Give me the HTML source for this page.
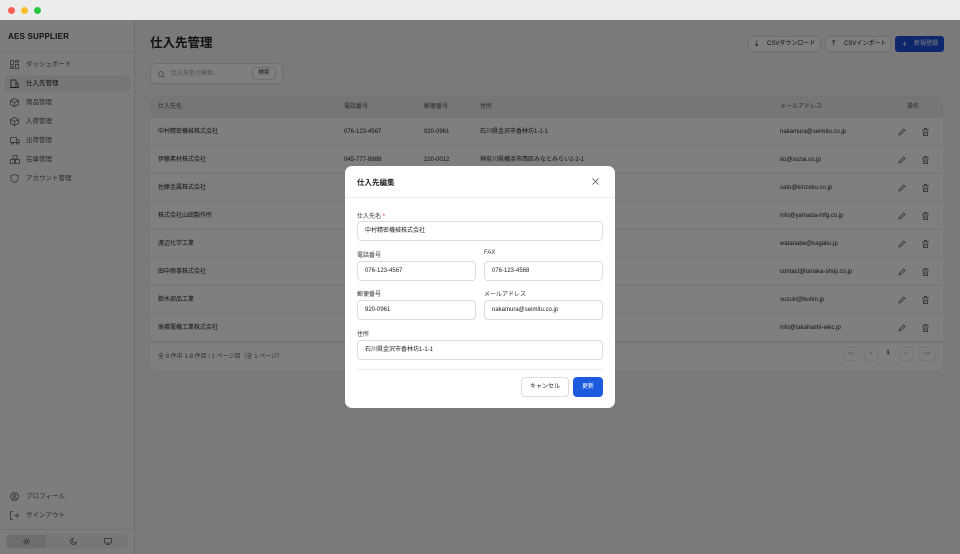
<!DOCTYPE html>
<html><head><meta charset="utf-8"><style>
*{box-sizing:border-box;margin:0;padding:0}
body{width:960px;height:554px;overflow:hidden;font-family:"Liberation Sans","Noto Sans CJK JP",sans-serif;background:#f5f5f5;position:relative;color:#222}
.tb{position:absolute;left:0;top:0;width:960px;height:20px;background:#ececec;z-index:30}
.tb i{position:absolute;top:7px;width:7px;height:7px;border-radius:50%}
.sb{position:absolute;left:0;top:20px;width:135px;height:534px;background:#fafafa;border-right:1px solid #e3e3e3}
.logo{position:absolute;left:8px;top:12px;font-size:8px;font-weight:bold;letter-spacing:.2px}
.sbl{position:absolute;left:0;top:31px;width:134px;border-top:1px solid #e6e6e6}
.nav{position:absolute;left:5px;width:125px;height:17px;font-size:6.5px;color:#555;line-height:17px;padding-left:21px;border-radius:4px}
.nav svg{position:absolute;left:5px;top:4px}
.act{background:#ececec;color:#222}
.main{position:absolute;left:135px;top:20px;right:0;bottom:0}
h1{position:absolute;left:15px;top:15px;font-size:12.5px;font-weight:bold;line-height:16px}
.btn{position:absolute;top:16px;height:16px;border:1px solid #ddd;background:#fff;border-radius:3px;font-size:6px;line-height:14px;padding-left:18px}
.srch{position:absolute;left:15px;top:43px;width:133px;height:21px;border:1px solid #ddd;border-radius:5px;background:#fff;font-size:6px;color:#999;line-height:21px;padding-left:20px}
.srch b{position:absolute;right:6px;top:3px;height:13px;width:24px;border:1px solid #ddd;border-radius:3px;font-weight:normal;color:#333;text-align:center;line-height:11px;font-size:5.5px}
.tbl{position:absolute;left:15px;top:76px;width:793px;height:274px;background:#fff;border-radius:5px;overflow:hidden}
.th{height:22px;background:#ededed;font-size:6px;color:#555;position:relative}
.row{height:28px;border-bottom:1px solid #eaeaea;position:relative;font-size:6px}
.c{position:absolute;top:0;line-height:28px}
.th .c{line-height:22px}
.ft{position:absolute;left:8px;top:255px;font-size:6px;color:#555}
.pg{position:absolute;top:251px;height:14px;border:1px solid #eee;border-radius:3px;font-size:5.5px;color:#999;text-align:center;line-height:12px}
.ov{position:absolute;left:0;top:20px;width:960px;height:534px;background:rgba(0,0,0,.5);z-index:10}
.md{position:absolute;left:345px;top:166px;width:270px;height:242px;background:#fff;border-radius:7px;z-index:20}
.md .t{position:absolute;left:12px;top:11px;font-size:7.5px;font-weight:bold}
.md .hl{position:absolute;left:0;top:31px;width:270px;border-top:1px solid #eee}
.lb{position:absolute;font-size:6px;color:#333}
.in{position:absolute;height:20px;border:1px solid #ddd;border-radius:4px;font-size:6px;line-height:18px;padding-left:7px;color:#222}
</style></head><body>
<div class="tb"><i style="left:8px;background:#fe5f57"></i><i style="left:21px;background:#febc2e"></i><i style="left:34px;background:#28c840"></i></div>
<div class="sb">
<div class="logo">AES SUPPLIER</div><div class="sbl"></div>
<div class="nav" style="top:36px"><svg width="9" height="9" viewBox="0 0 9 9" fill="none" stroke="#666" stroke-width=".8"><rect x=".5" y=".5" width="3" height="4"/><rect x="5.5" y=".5" width="3" height="2"/><rect x="5.5" y="4.5" width="3" height="4"/><rect x=".5" y="6.5" width="3" height="2"/></svg>ダッシュボード</div>
<div class="nav act" style="top:55px"><svg width="9" height="9" viewBox="0 0 9 9" fill="none" stroke="#333" stroke-width=".8"><rect x="1" y="1" width="5" height="7.5"/><path d="M6 4h2v4.5M0 8.5h9"/></svg>仕入先管理</div>
<div class="nav" style="top:74px"><svg width="9" height="9" viewBox="0 0 9 9" fill="none" stroke="#666" stroke-width=".8"><path d="M4.5.5l4 2v4l-4 2-4-2v-4zM.5 2.5l4 2 4-2M4.5 4.5v4"/></svg>商品管理</div>
<div class="nav" style="top:93px"><svg width="9" height="9" viewBox="0 0 9 9" fill="none" stroke="#666" stroke-width=".8"><path d="M4.5.5l4 2v4l-4 2-4-2v-4zM.5 2.5l4 2 4-2M4.5 4.5v4"/></svg>入荷管理</div>
<div class="nav" style="top:112px"><svg width="10" height="9" viewBox="0 0 10 9" fill="none" stroke="#666" stroke-width=".8"><path d="M.5 1.5h6v5h-6zM6.5 3.5h2l1 1.5v1.5h-3"/><circle cx="2.5" cy="7.3" r=".9"/><circle cx="7.5" cy="7.3" r=".9"/></svg>出荷管理</div>
<div class="nav" style="top:131px"><svg width="10" height="9" viewBox="0 0 10 9" fill="none" stroke="#666" stroke-width=".8"><rect x="3" y=".5" width="4" height="3.5"/><rect x=".5" y="4.5" width="4" height="4"/><rect x="5.5" y="4.5" width="4" height="4"/></svg>在庫管理</div>
<div class="nav" style="top:150px"><svg width="9" height="9" viewBox="0 0 9 9" fill="none" stroke="#666" stroke-width=".8"><path d="M4.5.5l3.5 1.3v3c0 2-2 3.2-3.5 3.7C3 8 1 6.8 1 4.8v-3z"/></svg>アカウント管理</div>
<div class="nav" style="top:468px"><svg width="9" height="9" viewBox="0 0 9 9" fill="none" stroke="#666" stroke-width=".8"><circle cx="4.5" cy="4.5" r="4"/><circle cx="4.5" cy="3.6" r="1.4"/><path d="M2 7.3c1.2-1.6 3.8-1.6 5 0"/></svg>プロフィール</div>
<div class="nav" style="top:487px"><svg width="9" height="9" viewBox="0 0 9 9" fill="none" stroke="#666" stroke-width=".8"><path d="M3 .5H.5v8H3M4 4.5h4.5M6.5 2.5l2 2-2 2"/></svg>サインアウト</div>
<div style="position:absolute;left:0;top:509px;width:134px;border-top:1px solid #e3e3e3"></div>
<div style="position:absolute;left:6px;top:514px;width:122px;height:15px;background:#eee;border-radius:3px"><div style="position:absolute;left:1px;top:1px;width:39px;height:13px;background:#ddd;border-radius:2px"></div>
<svg style="position:absolute;left:17px;top:4px" width="7" height="7" viewBox="0 0 7 7" fill="none" stroke="#555" stroke-width=".7"><circle cx="3.5" cy="3.5" r="1.3"/><path d="M3.5 0v1.2M3.5 5.8V7M0 3.5h1.2M5.8 3.5H7M1 1l.8.8M5.2 5.2l.8.8M1 6l.8-.8M5.2 1.8L6 1"/></svg>
<svg style="position:absolute;left:64px;top:4px" width="7" height="7" viewBox="0 0 7 7" fill="none" stroke="#555" stroke-width=".7"><path d="M3 .5a3 3 0 1 0 3.5 3.8A2.5 2.5 0 0 1 3 .5z"/></svg>
<svg style="position:absolute;left:98px;top:4px" width="8" height="7" viewBox="0 0 8 7" fill="none" stroke="#555" stroke-width=".7"><rect x=".5" y=".5" width="7" height="4.5"/><path d="M4 5v1.5M2.5 6.6h3"/></svg></div>
</div>
<div class="main">
<h1>仕入先管理</h1>
<div class="btn" style="left:613px;width:73px"><span style="position:absolute;left:6px;top:0;font-size:8px">⤓</span>CSVダウンロード</div>
<div class="btn" style="left:690px;width:66px"><span style="position:absolute;left:6px;top:0;font-size:8px">⤒</span>CSVインポート</div>
<div class="btn" style="left:760px;width:49px;background:#1d4ed8;border-color:#1d4ed8;color:#fff"><span style="position:absolute;left:6px;top:0;font-size:9px">+</span>新規登録</div>
<div class="srch"><svg style="position:absolute;left:7px;top:7px" width="7" height="7" viewBox="0 0 7 7" fill="none" stroke="#777" stroke-width=".7"><circle cx="3" cy="3" r="2.4"/><path d="M4.8 4.8L6.6 6.6"/></svg>仕入先名で検索...<b>検索</b></div>
<div class="tbl">
<div class="th"><span class="c" style="left:8px">仕入先名</span><span class="c" style="left:194px">電話番号</span><span class="c" style="left:274px">郵便番号</span><span class="c" style="left:330px">住所</span><span class="c" style="left:630px">メールアドレス</span><span class="c" style="left:757px">操作</span></div>
<div id="rows"></div>
<div class="ft">全 8 件中 1-8 件目 / 1 ページ目（全 1 ページ）</div>
<div style="position:absolute;left:0;top:246px;width:793px;border-top:1px solid #e5e5e5"></div>
<div class="pg" style="left:693px;width:16px">&lt;&lt;</div>
<div class="pg" style="left:714px;width:14px">&lt;</div>
<div class="pg" style="left:732px;width:12px;border:none;color:#222;font-weight:bold">1</div>
<div class="pg" style="left:749px;width:14px">&gt;</div>
<div class="pg" style="left:768px;width:18px">&gt;&gt;</div>
</div>
</div>
<script>
var d=[["中村精密機械株式会社","076-123-4567","920-0961","石川県金沢市香林坊1-1-1","nakamura@seimitu.co.jp"],["伊藤素材株式会社","045-777-8888","220-0012","神奈川県横浜市西区みなとみらい2-2-1","ito@sozai.co.jp"],["佐藤金属株式会社","","","","sato@kinzoku.co.jp"],["株式会社山田製作所","","","","info@yamada-mfg.co.jp"],["渡辺化学工業","","","","watanabe@kagaku.jp"],["田中商事株式会社","","","","contact@tanaka-shoji.co.jp"],["鈴木部品工業","","","","suzuki@buhin.jp"],["高橋電機工業株式会社","","","","info@takahashi-elec.jp"]];
var h="",pen='<svg width="8" height="8" viewBox="0 0 8 8" fill="none" stroke="#555" stroke-width=".7"><path d="M1 7l.4-1.8L5.6 1l1.4 1.4-4.2 4.2z"/></svg>',bin='<svg width="7" height="8" viewBox="0 0 7 8" fill="none" stroke="#555" stroke-width=".7"><path d="M.3 1.8h6.4M2.3 1.8V.6h2.4v1.2M1 1.8l.5 5.8h4l.5-5.8M2.8 3.2v3M4.2 3.2v3"/></svg>';
d.forEach(function(r){h+='<div class="row"><span class="c" style="left:8px">'+r[0]+'</span><span class="c" style="left:194px">'+r[1]+'</span><span class="c" style="left:274px">'+r[2]+'</span><span class="c" style="left:330px">'+r[3]+'</span><span class="c" style="left:630px">'+r[4]+'</span><span class="c" style="left:748px;top:10px;line-height:0">'+pen+'</span><span class="c" style="left:772px;top:10px;line-height:0">'+bin+'</span></div>'});
document.getElementById('rows').innerHTML=h;
</script>
<div class="ov"></div>
<div class="md">
<div class="t">仕入先編集</div>
<svg style="position:absolute;left:247px;top:12px" width="7" height="7" viewBox="0 0 7 7" stroke="#555" stroke-width=".8"><path d="M.5.5l6 6M6.5.5l-6 6"/></svg>
<div class="hl"></div>
<div class="lb" style="left:12px;top:45px">仕入先名 <span style="color:#e11">*</span></div>
<div class="in" style="left:12px;top:55px;width:246px">中村精密機械株式会社</div>
<div class="lb" style="left:12px;top:84px">電話番号</div><div class="lb" style="left:139px;top:84px">FAX</div>
<div class="in" style="left:12px;top:95px;width:119px">076-123-4567</div><div class="in" style="left:139px;top:95px;width:119px">076-123-4568</div>
<div class="lb" style="left:12px;top:123px">郵便番号</div><div class="lb" style="left:139px;top:123px">メールアドレス</div>
<div class="in" style="left:12px;top:134px;width:119px">920-0961</div><div class="in" style="left:139px;top:134px;width:119px">nakamura@seimitu.co.jp</div>
<div class="lb" style="left:12px;top:163px">住所</div>
<div class="in" style="left:12px;top:174px;width:246px">石川県金沢市香林坊1-1-1</div>
<div style="position:absolute;left:12px;top:203px;width:246px;border-top:1px solid #eee"></div>
<div class="in" style="left:176px;top:211px;width:48px;padding:0;text-align:center">キャンセル</div>
<div class="in" style="left:228px;top:211px;width:30px;padding:0;text-align:center;background:#1d5ae0;border-color:#1d5ae0;color:#fff">更新</div>
</div>
</body></html>
